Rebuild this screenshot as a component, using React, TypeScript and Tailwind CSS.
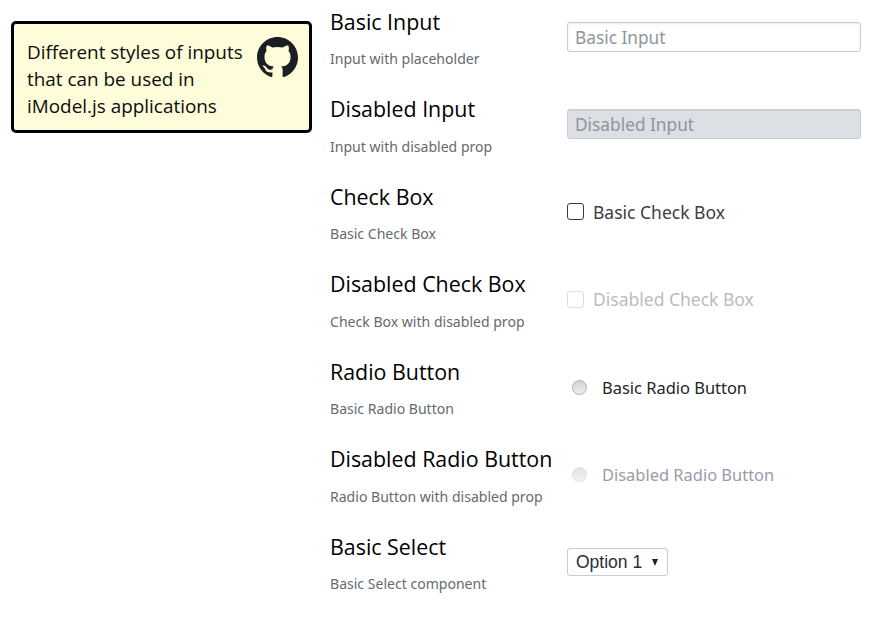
const rows = [
  { title: "Basic Input", desc: "Input with placeholder", kind: "input" },
  { title: "Disabled Input", desc: "Input with disabled prop", kind: "input-disabled" },
  { title: "Check Box", desc: "Basic Check Box", kind: "check" },
  { title: "Disabled Check Box", desc: "Check Box with disabled prop", kind: "check-disabled" },
  { title: "Radio Button", desc: "Basic Radio Button", kind: "radio" },
  { title: "Disabled Radio Button", desc: "Radio Button with disabled prop", kind: "radio-disabled" },
  { title: "Basic Select", desc: "Basic Select component", kind: "select" },
];

function GithubMark() {
  return (
    <svg viewBox="0 0 16 16" className="-mt-[2px] h-[41px] w-[41px] shrink-0" fill="#1b1f23">
      <path d="M8 0C3.58 0 0 3.58 0 8c0 3.54 2.29 6.53 5.47 7.59.4.07.55-.17.55-.38 0-.19-.01-.82-.01-1.49-2.01.37-2.53-.49-2.69-.94-.09-.23-.48-.94-.82-1.13-.28-.15-.68-.52-.01-.53.63-.01 1.08.58 1.23.82.72 1.21 1.87.87 2.33.66.07-.52.28-.87.51-1.07-1.78-.2-3.64-.89-3.64-3.95 0-.87.31-1.59.82-2.15-.08-.2-.36-1.02.08-2.12 0 0 .67-.21 2.2.82.64-.18 1.32-.27 2-.27.68 0 1.36.09 2 .27 1.53-1.04 2.2-.82 2.2-.82.44 1.1.16 1.92.08 2.12.51.56.82 1.27.82 2.15 0 3.07-1.87 3.75-3.65 3.95.29.25.54.73.54 1.48 0 1.07-.01 1.93-.01 2.2 0 .21.15.46.55.38A8.013 8.013 0 0016 8c0-4.42-3.58-8-8-8z" />
    </svg>
  );
}

function Control({ kind }: { kind: string }) {
  if (kind === "input" || kind === "input-disabled") {
    const disabled = kind === "input-disabled";
    return (
      <input
        disabled={disabled}
        placeholder={disabled ? "Disabled Input" : "Basic Input"}
        className={`h-[30px] w-[294px] rounded-[3px] border border-[#c7ccd1] px-[7px] text-[17.3px] outline-none placeholder:text-[#8f959b] ${
          disabled ? "bg-[#dcdfe3] shadow-[inset_0_1px_1px_rgba(0,0,0,0.05)]" : "bg-white pt-[2px] shadow-[inset_0_1px_2px_rgba(0,0,0,0.08)]"
        }`}
      />
    );
  }
  if (kind === "check" || kind === "check-disabled") {
    const disabled = kind === "check-disabled";
    return (
      <div className="flex items-center gap-[9px]">
        <span className={`h-[17px] w-[17px] rounded-[3px] border ${disabled ? "border-[#dcdfe1] bg-white" : "border-[#3a3d40] bg-white"}`} />
        <span className={`text-[17.5px] ${disabled ? "text-[#b9bcbf]" : "text-[#3b3e42]"}`}>
          {disabled ? "Disabled Check Box" : "Basic Check Box"}
        </span>
      </div>
    );
  }
  if (kind === "radio" || kind === "radio-disabled") {
    const disabled = kind === "radio-disabled";
    return (
      <div className="mt-[2.3px] flex items-center gap-[15px] pl-[5px]">
        <span
          className={`-mt-[2px] h-[15px] w-[15px] rounded-full border ${
            disabled
              ? "border-[#e0e0e0] bg-gradient-to-b from-[#e4e4e4] to-[#f2f2f2]"
              : "border-[#b0b0b0] bg-gradient-to-b from-[#d2d2d2] to-[#eeeeee]"
          }`}
        />
        <span className={`text-[16.45px] ${disabled ? "text-[#9a9ba8]" : "text-[#222428]"}`}>
          {disabled ? "Disabled Radio Button" : "Basic Radio Button"}
        </span>
      </div>
    );
  }
  return (
    <div className="flex h-[28px] w-[101px] items-center justify-between rounded-[3px] border border-[#c7ccd1] bg-white pl-2 pr-[9px] font-['Liberation_Sans',sans-serif] text-[17.5px] text-[#2a2d31]">
      <span>Option 1</span>
      <span className="mt-[1px] h-0 w-0 border-x-[3.5px] border-t-[7px] border-x-transparent border-t-[#222222]" />
    </div>
  );
}

export default function App() {
  return (
    <div className="flex h-[622px] w-[870px] items-start overflow-hidden bg-white pl-[11px] font-['Noto_Sans','Open_Sans',sans-serif]">
      <div className="mt-[21px] flex h-[112px] w-[301px] shrink-0 items-start justify-between rounded-[5px] border-[3px] border-black bg-[#fffcd9] pl-[13px] pr-[11px] pt-[15px]">
        <p className="w-[227px] font-['Open_Sans',sans-serif] text-[18.9px] leading-[27px] text-[#0d0d0d]">
          Different styles of inputs that can be used in iModel.js applications
        </p>
        <GithubMark />
      </div>
      <div className="ml-[18px] -mt-[0.25px] flex flex-col">
        {rows.map((row) => (
          <div key={row.title} className="flex h-[87.5px] shrink-0">
            <div className="w-[237px] shrink-0 pt-[7px]">
              <div className="h-[30px] whitespace-nowrap font-['Open_Sans',sans-serif] text-[21.4px] leading-[30px] text-black">{row.title}</div>
              <div className="mt-[12.3px] whitespace-nowrap text-[14.05px] leading-5 text-[#666a70]">{row.desc}</div>
            </div>
            <div className="flex h-[74.4px] items-center">
              <Control kind={row.kind} />
            </div>
          </div>
        ))}
      </div>
    </div>
  );
}
